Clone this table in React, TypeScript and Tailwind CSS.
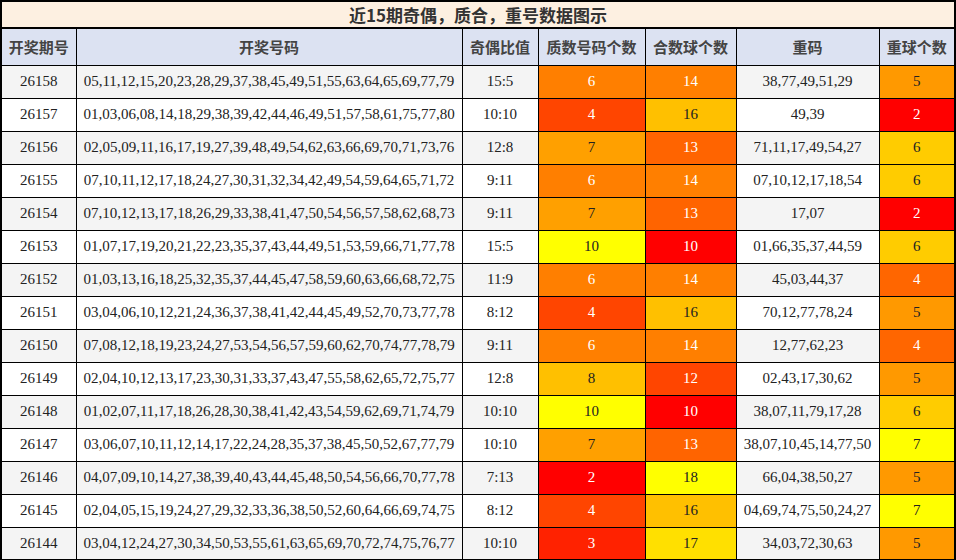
const rows: [string, string, string, number, number, string, number][] = [
  ['26158', '05,11,12,15,20,23,28,29,37,38,45,49,51,55,63,64,65,69,77,79', '15:5', 6, 14, '38,77,49,51,29', 5],
  ['26157', '01,03,06,08,14,18,29,38,39,42,44,46,49,51,57,58,61,75,77,80', '10:10', 4, 16, '49,39', 2],
  ['26156', '02,05,09,11,16,17,19,27,39,48,49,54,62,63,66,69,70,71,73,76', '12:8', 7, 13, '71,11,17,49,54,27', 6],
  ['26155', '07,10,11,12,17,18,24,27,30,31,32,34,42,49,54,59,64,65,71,72', '9:11', 6, 14, '07,10,12,17,18,54', 6],
  ['26154', '07,10,12,13,17,18,26,29,33,38,41,47,50,54,56,57,58,62,68,73', '9:11', 7, 13, '17,07', 2],
  ['26153', '01,07,17,19,20,21,22,23,35,37,43,44,49,51,53,59,66,71,77,78', '15:5', 10, 10, '01,66,35,37,44,59', 6],
  ['26152', '01,03,13,16,18,25,32,35,37,44,45,47,58,59,60,63,66,68,72,75', '11:9', 6, 14, '45,03,44,37', 4],
  ['26151', '03,04,06,10,12,21,24,36,37,38,41,42,44,45,49,52,70,73,77,78', '8:12', 4, 16, '70,12,77,78,24', 5],
  ['26150', '07,08,12,18,19,23,24,27,53,54,56,57,59,60,62,70,74,77,78,79', '9:11', 6, 14, '12,77,62,23', 4],
  ['26149', '02,04,10,12,13,17,23,30,31,33,37,43,47,55,58,62,65,72,75,77', '12:8', 8, 12, '02,43,17,30,62', 5],
  ['26148', '01,02,07,11,17,18,26,28,30,38,41,42,43,54,59,62,69,71,74,79', '10:10', 10, 10, '38,07,11,79,17,28', 6],
  ['26147', '03,06,07,10,11,12,14,17,22,24,28,35,37,38,45,50,52,67,77,79', '10:10', 7, 13, '38,07,10,45,14,77,50', 7],
  ['26146', '04,07,09,10,14,27,38,39,40,43,44,45,48,50,54,56,66,70,77,78', '7:13', 2, 18, '66,04,38,50,27', 5],
  ['26145', '02,04,05,15,19,24,27,29,32,33,36,38,50,52,60,64,66,69,74,75', '8:12', 4, 16, '04,69,74,75,50,24,27', 7],
  ['26144', '03,04,12,24,27,30,34,50,53,55,61,63,65,69,70,72,74,75,76,77', '10:10', 3, 17, '34,03,72,30,63', 5],
];

// heat colours per column value
const primeColor: Record<number, string> = {
  2: 'bg-[#ff0000] text-white',
  3: 'bg-[#ff2200] text-white',
  4: 'bg-[#ff4500] text-white',
  6: 'bg-[#ff7f00] text-white',
  7: 'bg-[#ffa000] text-[#222]',
  8: 'bg-[#ffc000] text-[#222]',
  10: 'bg-[#ffff00] text-[#222]',
};

const compColor: Record<number, string> = {
  10: 'bg-[#ff0000] text-white',
  12: 'bg-[#ff4500] text-white',
  13: 'bg-[#ff6400] text-white',
  14: 'bg-[#ff7f00] text-white',
  16: 'bg-[#ffc000] text-[#222]',
  17: 'bg-[#ffe000] text-[#222]',
  18: 'bg-[#ffff00] text-[#222]',
};

const repeatColor: Record<number, string> = {
  2: 'bg-[#ff0000] text-white',
  4: 'bg-[#ff6600] text-white',
  5: 'bg-[#ff9900] text-[#222]',
  6: 'bg-[#ffcc00] text-[#222]',
  7: 'bg-[#ffff00] text-[#222]',
};

const headers = ['开奖期号', '开奖号码', '奇偶比值', '质数号码个数', '合数球个数', '重码', '重球个数'];
const widths = ['w-[75px]', 'w-[386px]', 'w-[76px]', 'w-[107px]', 'w-[91px]', 'w-[143px]', 'w-[76px]'];

export default function App() {
  return (
    <div className="w-[956px] h-[560px] bg-white overflow-hidden">
      <table className="w-[954px] table-fixed border-collapse border-2 border-black font-['Liberation_Serif',serif] text-[15px] text-[#222]">
        <colgroup>
          {widths.map((w, i) => (
            <col key={i} className={w} />
          ))}
        </colgroup>
        <thead>
          <tr className="h-[27px]">
            <th
              colSpan={7}
              className="border-2 border-black bg-[#fdf0e1] text-[17px] font-bold text-[#333] font-['Noto_Sans_CJK_SC',sans-serif] leading-none"
            >
              近15期奇偶，质合，重号数据图示
            </th>
          </tr>
          <tr className="h-[37px]">
            {headers.map((h) => (
              <th
                key={h}
                className="border border-black bg-[#dce2f2] text-[15px] font-bold text-[#444] font-['Noto_Sans_CJK_SC',sans-serif] leading-none"
              >
                {h}
              </th>
            ))}
          </tr>
        </thead>
        <tbody>
          {rows.map(([issue, nums, ratio, prime, comp, rep, repCount], i) => {
            const bg = i % 2 === 0 ? 'bg-[#f4f4f4]' : 'bg-white';
            return (
              <tr key={issue} className="h-[33px]">
                <td className={`border border-black text-center ${bg}`}>{issue}</td>
                <td className={`border border-black text-center whitespace-nowrap ${bg}`}>{nums}</td>
                <td className={`border border-black text-center ${bg}`}>{ratio}</td>
                <td className={`border border-black text-center ${primeColor[prime]}`}>{prime}</td>
                <td className={`border border-black text-center ${compColor[comp]}`}>{comp}</td>
                <td className={`border border-black text-center whitespace-nowrap ${bg}`}>{rep}</td>
                <td className={`border border-black text-center ${repeatColor[repCount]}`}>{repCount}</td>
              </tr>
            );
          })}
        </tbody>
      </table>
    </div>
  );
}
